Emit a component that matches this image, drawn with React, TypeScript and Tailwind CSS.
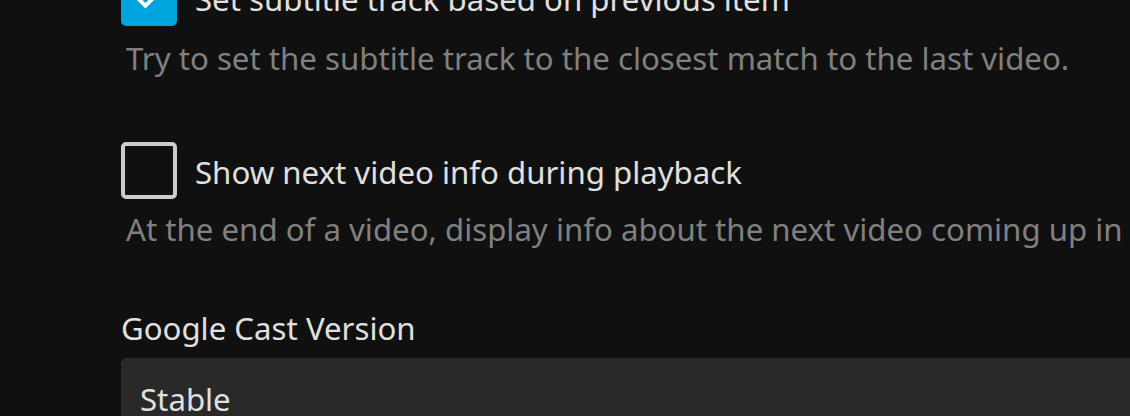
import React from "react";

const font = { fontFamily: '"Noto Sans", sans-serif' };

function CheckRow({
  checked,
  label,
  description,
  descGap,
}: {
  checked: boolean;
  label: string;
  description: string;
  descGap: string;
}) {
  return (
    <div className="flex flex-col">
      <label className="flex items-center gap-[18px]">
        {checked ? (
          <span className="flex h-[57px] w-[56px] shrink-0 items-center justify-center rounded-[5px] bg-[#00a4dc]">
            <svg width="34" height="34" viewBox="0 0 24 24" fill="none">
              <path
                d="M4.5 12.5l5 5 10-10"
                stroke="white"
                strokeWidth="2.8"
                strokeLinecap="square"
              />
            </svg>
          </span>
        ) : (
          <span className="h-[57px] w-[56px] shrink-0 rounded-[5px] border-[4px] border-[#cccccc]" />
        )}
        <span className="mt-[4px] text-[31.2px] leading-[46.5px] text-[#e0e0e0]">
          {label}
        </span>
      </label>
      <p
        className={`${descGap} whitespace-nowrap pl-[5px] text-[31.2px] leading-[46.5px] text-[#808080]`}
      >
        {description}
      </p>
    </div>
  );
}

export default function App() {
  return (
    <div
      className="h-[416px] w-[1130px] overflow-hidden bg-[#101010]"
      style={font}
    >
      <div className="-mt-[31px] flex flex-col pl-[121px]">
        <CheckRow
          checked
          descGap="mt-[9px]"
          label="Set subtitle track based on previous item"
          description="Try to set the subtitle track to the closest match to the last video."
        />
        <div className="mt-[60px]">
          <CheckRow
            checked={false}
            descGap="mt-[7px]"
            label="Show next video info during playback"
            description="At the end of a video, display info about the next video coming up in the current playlist."
          />
        </div>
        <div className="mt-[53px] flex flex-col">
          <span className="text-[31.2px] leading-[46.5px] text-[#e0e0e0]">
            Google Cast Version
          </span>
          <div className="mt-[6px] h-[80px] w-[1200px] rounded-[5px] bg-[#292929] px-[19px] pt-[18px] text-[31.2px] leading-[46.5px] text-[#e0e0e0]">
            Stable
          </div>
        </div>
      </div>
    </div>
  );
}
